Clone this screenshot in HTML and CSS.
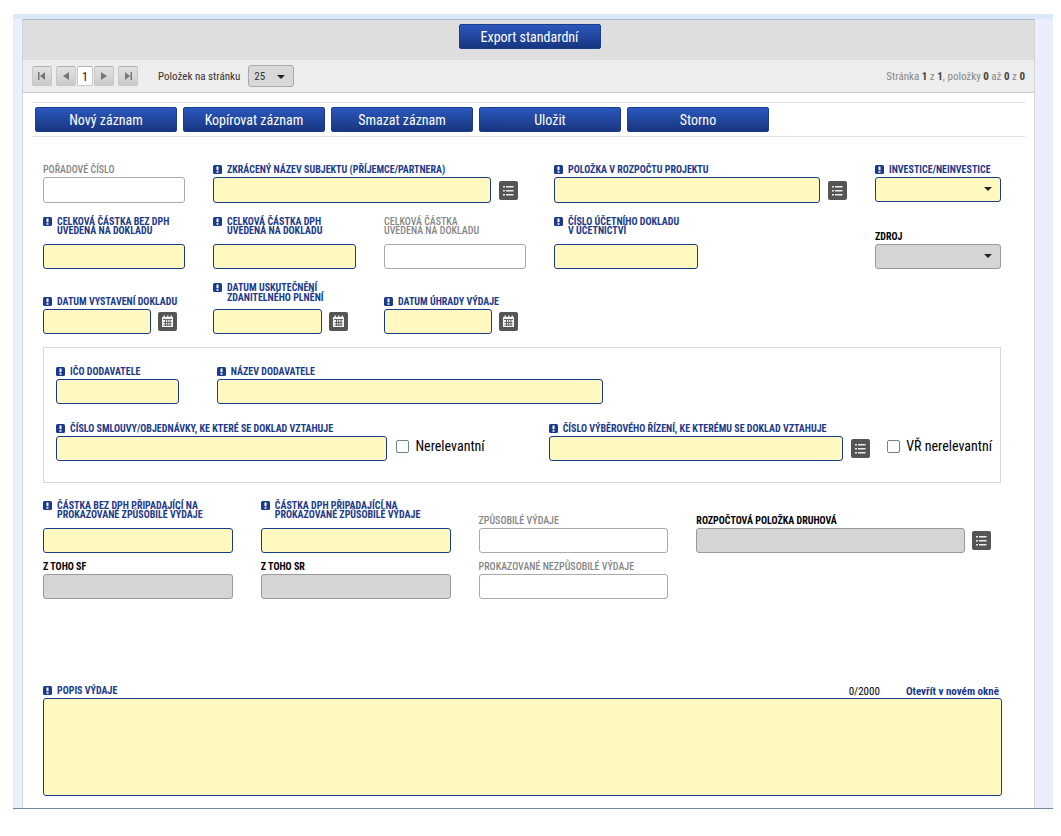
FILE: index.html
```html
<!DOCTYPE html>
<html lang="cs">
<head>
<meta charset="utf-8">
<title>Soupiska dokladů</title>
<link rel="stylesheet" href="styles.css">
</head>
<body>
<svg class="sprite" aria-hidden="true">
  <symbol id="req" viewBox="0 0 9 9"><rect width="9" height="9" rx="1.5" fill="#1b3a8a"/><path d="M3.5 1.5h2v3.8h-2zM3.5 6.2h2v1.5h-2z" fill="#fff"/></symbol>
  <symbol id="list" viewBox="0 0 19 19"><rect width="19" height="19" rx="2" fill="#555"/><path d="M4 5h2v1.600H4zM4 9h2v1.600H4zM4 13h2v1.600H4zM7 5h7.500v1.600H7zM7 9h7.500v1.600H7zM7 13h7.500v1.600H7z" fill="#eee"/></symbol>
  <symbol id="cal" viewBox="0 0 19 19"><rect width="19" height="19" rx="2" fill="#555"/><path d="M4 5h1.500V3.500h1.500V5h2V3.500h1.500V5h2V3.500H14V5h1v10H4z" fill="#f4f4f4"/><path d="M5 7.500h9M5.500 10.500h8M5.500 13h8M7.500 8v6M9.700 8v6M12 8v6" stroke="#555" stroke-width=".9"/></symbol>
</svg>
<div class="window">
<main class="panel">
  <div class="export-bar"><button class="btn">Export standardní</button></div>

  <div class="pager">
    <nav class="pages" aria-label="Stránkování">
      <button class="page-btn" aria-label="První"><svg viewBox="0 0 10 10"><path d="M1 1h1.500v8H1zM8 1v8L3 5z"/></svg></button>
      <button class="page-btn" aria-label="Předchozí"><svg viewBox="0 0 10 10"><path d="M8 1v8L2 5z"/></svg></button>
      <button class="page-btn page-btn--current">1</button>
      <button class="page-btn" aria-label="Další"><svg viewBox="0 0 10 10"><path d="M2 1v8l6-4z"/></svg></button>
      <button class="page-btn" aria-label="Poslední"><svg viewBox="0 0 10 10"><path d="M2 1v8l5-4zM7.500 1H9v8H7.500z"/></svg></button>
    </nav>
    <label class="pager-label" for="size">Položek na stránku</label>
    <div class="select select--small"><select id="size"><option>25</option></select></div>
    <p class="pager-info">Stránka <b>1</b> z <b>1</b>, položky <b>0</b> až <b>0</b> z <b>0</b></p>
  </div>

  <div class="actions">
    <button class="btn">Nový záznam</button>
    <button class="btn">Kopírovat záznam</button>
    <button class="btn">Smazat záznam</button>
    <button class="btn">Uložit</button>
    <button class="btn">Storno</button>
  </div>

  <form class="form">
    <div class="row row--main row--first">
      <div class="field muted"><label for="f1">POŘADOVÉ ČÍSLO</label><input id="f1"></div>
      <div class="field required span2"><label for="f2"><svg class="req"><use href="#req"/></svg><span>ZKRÁCENÝ NÁZEV SUBJEKTU (PŘÍJEMCE/PARTNERA)</span></label>
        <div class="picker"><input id="f2"><button type="button" class="icon-btn" aria-label="Vybrat"><svg><use href="#list"/></svg></button></div></div>
      <div class="field required"><label for="f3"><svg class="req"><use href="#req"/></svg><span>POLOŽKA V ROZPOČTU PROJEKTU</span></label>
        <div class="picker picker--flush"><input id="f3"><button type="button" class="icon-btn" aria-label="Vybrat"><svg><use href="#list"/></svg></button></div></div>
      <div class="field required"><label for="f4"><svg class="req"><use href="#req"/></svg><span>INVESTICE/NEINVESTICE</span></label>
        <div class="select"><select id="f4"><option></option></select></div></div>
    </div>

    <div class="row row--main row--amounts">
      <div class="field required"><label class="tall" for="f5"><svg class="req"><use href="#req"/></svg><span>CELKOVÁ ČÁSTKA BEZ DPH<br>UVEDENÁ NA DOKLADU</span></label><input id="f5"></div>
      <div class="field required"><label class="tall" for="f6"><svg class="req"><use href="#req"/></svg><span>CELKOVÁ ČÁSTKA DPH<br>UVEDENÁ NA DOKLADU</span></label><input id="f6"></div>
      <div class="field muted"><label class="tall" for="f7"><span>CELKOVÁ ČÁSTKA<br>UVEDENÁ NA DOKLADU</span></label><input id="f7"></div>
      <div class="field required"><label class="tall" for="f8"><svg class="req"><use href="#req"/></svg><span>ČÍSLO ÚČETNÍHO DOKLADU<br>V ÚČETNICTVÍ</span></label><input class="half" id="f8"></div>
      <div class="field locked"><label for="f9">ZDROJ</label><div class="select"><select id="f9"><option></option></select></div></div>
    </div>

    <div class="row row--main row--dates">
      <div class="field required"><label for="f10"><svg class="req"><use href="#req"/></svg><span>DATUM VYSTAVENÍ DOKLADU</span></label>
        <div class="picker"><input id="f10"><button type="button" class="icon-btn" aria-label="Kalendář"><svg><use href="#cal"/></svg></button></div></div>
      <div class="field required"><label class="two" for="f11"><svg class="req"><use href="#req"/></svg><span>DATUM USKUTEČNĚNÍ<br>ZDANITELNÉHO PLNĚNÍ</span></label>
        <div class="picker"><input id="f11"><button type="button" class="icon-btn" aria-label="Kalendář"><svg><use href="#cal"/></svg></button></div></div>
      <div class="field required"><label for="f12"><svg class="req"><use href="#req"/></svg><span>DATUM ÚHRADY VÝDAJE</span></label>
        <div class="picker"><input id="f12"><button type="button" class="icon-btn" aria-label="Kalendář"><svg><use href="#cal"/></svg></button></div></div>
    </div>

    <section class="box">
      <div class="row row--supplier">
        <div class="field required"><label for="f13"><svg class="req"><use href="#req"/></svg><span>IČO DODAVATELE</span></label><input id="f13"></div>
        <div class="field required"><label for="f14"><svg class="req"><use href="#req"/></svg><span>NÁZEV DODAVATELE</span></label><input id="f14"></div>
      </div>
      <div class="row row--contract">
        <div class="field required"><label for="f15"><svg class="req"><use href="#req"/></svg><span>ČÍSLO SMLOUVY/OBJEDNÁVKY, KE KTERÉ SE DOKLAD VZTAHUJE</span></label><input id="f15"></div>
        <div class="check"><input type="checkbox" id="c1"><label for="c1">Nerelevantní</label></div>
        <div class="field required"><label for="f16"><svg class="req"><use href="#req"/></svg><span>ČÍSLO VÝBĚROVÉHO ŘÍZENÍ, KE KTERÉMU SE DOKLAD VZTAHUJE</span></label>
          <div class="picker picker--flush"><input id="f16"><button type="button" class="icon-btn" aria-label="Vybrat"><svg><use href="#list"/></svg></button></div></div>
        <div class="check"><input type="checkbox" id="c2"><label for="c2">VŘ nerelevantní</label></div>
      </div>
    </section>

    <div class="row row--costs">
      <div class="field required"><label class="tall" for="f17"><svg class="req"><use href="#req"/></svg><span>ČÁSTKA BEZ DPH PŘIPADAJÍCÍ NA<br>PROKAZOVANÉ ZPŮSOBILÉ VÝDAJE</span></label><input id="f17"></div>
      <div class="field required"><label class="tall" for="f18"><svg class="req"><use href="#req"/></svg><span>ČÁSTKA DPH PŘIPADAJÍCÍ NA<br>PROKAZOVANÉ ZPŮSOBILÉ VÝDAJE</span></label><input id="f18"></div>
      <div class="field muted"><label for="f19">ZPŮSOBILÉ VÝDAJE</label><input id="f19"></div>
      <div class="field locked"><label for="f20">ROZPOČTOVÁ POLOŽKA DRUHOVÁ</label>
        <div class="picker"><input id="f20" readonly><button type="button" class="icon-btn" aria-label="Vybrat"><svg><use href="#list"/></svg></button></div></div>
      <div class="field locked"><label for="f21">Z TOHO SF</label><input id="f21" readonly></div>
      <div class="field locked"><label for="f22">Z TOHO SR</label><input id="f22" readonly></div>
      <div class="field muted"><label for="f23">PROKAZOVANÉ NEZPŮSOBILÉ VÝDAJE</label><input id="f23"></div>
    </div>

    <div class="field required notes">
      <div class="notes-head">
        <label for="f24"><svg class="req"><use href="#req"/></svg><span>POPIS VÝDAJE</span></label>
        <span class="count">0/2000</span>
        <a href="#okno">Otevřít v novém okně</a>
      </div>
      <textarea id="f24"></textarea>
    </div>
  </form>
</main>
</div>
</body>
</html>
```
FILE: styles.css
```css
* { box-sizing: border-box; }

body {
  margin: 0;
  padding: 14px 8px 0 13px;
  background: #fff;
  color: #000;
  font-family: "Roboto Condensed", "Liberation Sans Narrow", Roboto, sans-serif;
  font-size: 11px;
}

button, input, select, textarea { font: inherit; margin: 0; }
.sprite { position: absolute; width: 0; height: 0; }

.window {
  background: #ebeffd;
  border-top: 5px solid #dae8f7;
  border-bottom: 1px solid #74849d;
  padding: 0 18px 0 9px;
}

.panel {
  background: #fff;
  border: 1px solid #d2d4da;
  border-top-color: #a9bacf;
  border-bottom: 0;
}

.btn {
  width: 142px;
  height: 25px;
  padding: 0;
  border: 1px solid #1c3d8c;
  border-radius: 2px;
  background: linear-gradient(#2b57bd, #17367f);
  color: #fff;
  font-size: 14px;
}

.export-bar {
  display: flex;
  justify-content: center;
  align-items: flex-start;
  height: 40px;
  padding: 4px 0 0 2px;
  background: #dedede;
}

.pager {
  display: flex;
  align-items: center;
  height: 33px;
  padding: 0 9px;
  background: #ededed;
  border-bottom: 1px solid #cfcfcf;
  color: #333;
}

.pages { display: flex; margin-right: 16px; }
.page-btn {
  display: grid;
  place-items: center;
  width: 20px;
  height: 20px;
  margin-right: 4px;
  padding: 0;
  border: 1px solid #c8c8c8;
  border-top-color: #b2b2b2;
  border-radius: 2px;
  background: linear-gradient(#e2e2e2, #cbcbcb);
}
.page-btn svg { width: 10px; height: 10px; fill: #777; }
.page-btn:nth-child(2) { margin-right: 1px; }
.page-btn--current { width: 16px; margin-right: 1px; background: #fff; color: #4a1030; font-size: 13px; }
.pager-label { margin-right: 8px; }
.pager-info { margin: 0 0 0 auto; color: #888; }
.pager-info b { color: #444; }

.actions {
  display: flex;
  gap: 6px;
  margin: 9px 9px 0;
  padding: 4px 3px;
  border: solid #e2e2e2;
  border-width: 1px 0;
}

.form { padding: 28px 33px 12px 20px; }

.row { display: grid; column-gap: 28px; align-items: end; }
.row--main { grid-template-columns: 142fr 143fr 142fr 293fr 126fr; }
.row--first { align-items: start; }
.row--amounts { margin-top: 14px; }
.row--dates { margin-top: 14px; }
.row--supplier { grid-template-columns: 123fr 387fr 351fr; column-gap: 38px; }
.row--contract { grid-template-columns: 334fr auto 324fr auto; column-gap: 0; margin-top: 20px; }
.row--costs { grid-template-columns: 190fr 190fr 190fr 305fr; row-gap: 9px; margin-top: 18px; }
.span2 { grid-column: span 2; }

.field { min-width: 0; }
.field label {
  display: flex;
  gap: 5px;
  padding-bottom: 3px;
  font-size: 10px;
  line-height: 9px;
  font-weight: 700;
  white-space: nowrap;
}
.field .tall { padding-bottom: 9px; }
.field .two { padding-bottom: 6px; line-height: 10px; }
.req { flex: none; width: 9px; height: 9px; }
.required label { color: #1b3a8a; }
.muted label { color: #858585; font-weight: 500; }

.field input, .field select, textarea {
  display: block;
  width: 100%;
  height: 25px;
  border: 1px solid #aaa;
  border-radius: 3px;
  background: #fff;
}
.row--first .field input { height: 26px; }
.field.required input, .field.required select, .required textarea { border-color: #1b3a8a; background: #fff8c0; }
.field.locked input, .field.locked select { border-color: #999; background: #d5d5d5; }
.field input.half { width: 49%; }

.picker { display: flex; align-items: center; gap: 8px; padding-right: 8px; }
.row--dates .picker { gap: 7px; }
.row--costs .picker { gap: 7px; padding-right: 10px; }
.picker--flush { padding-right: 0; }
.picker input { flex: 1; min-width: 0; }
.icon-btn { flex: none; width: 19px; height: 19px; padding: 0; border: 0; background: none; }
.icon-btn svg { display: block; width: 19px; height: 19px; }

.select { position: relative; }
.select select { appearance: none; }
.select::after {
  content: "";
  position: absolute;
  top: 10px;
  right: 9px;
  border: solid transparent;
  border-width: 4px 4px 0;
  border-top-color: #222;
  pointer-events: none;
}
.select--small select {
  width: 46px;
  height: 22px;
  padding: 0 5px;
  border: 1px solid #aaa;
  border-radius: 3px;
  background: #d8d8d8;
  color: #333;
}

.box {
  margin-top: 13px;
  padding: 19px 8px 21px 12px;
  border: 1px solid #d8d8d8;
}

.check { display: flex; align-items: center; gap: 6px; padding: 0 0 7px 9px; font-size: 14px; white-space: nowrap; }
.check:nth-child(2) { padding-right: 64px; }
.check:last-child { padding-left: 17px; }
.check input { appearance: none; width: 13px; height: 13px; border: 1px solid #6f8686; border-radius: 2px; background: #fff; }
.check input:checked { background: #1b3a8a; }

.notes { margin: 86px -1px 0 0; }
.notes-head { display: flex; align-items: center; }
.notes-head label { margin-right: auto; }
.count { margin-right: 26px; line-height: 12px; }
.notes-head a { margin-right: 3px; color: #1b3a8a; font-weight: 700; text-decoration: none; }
.field textarea { height: 98px; resize: none; }
```
